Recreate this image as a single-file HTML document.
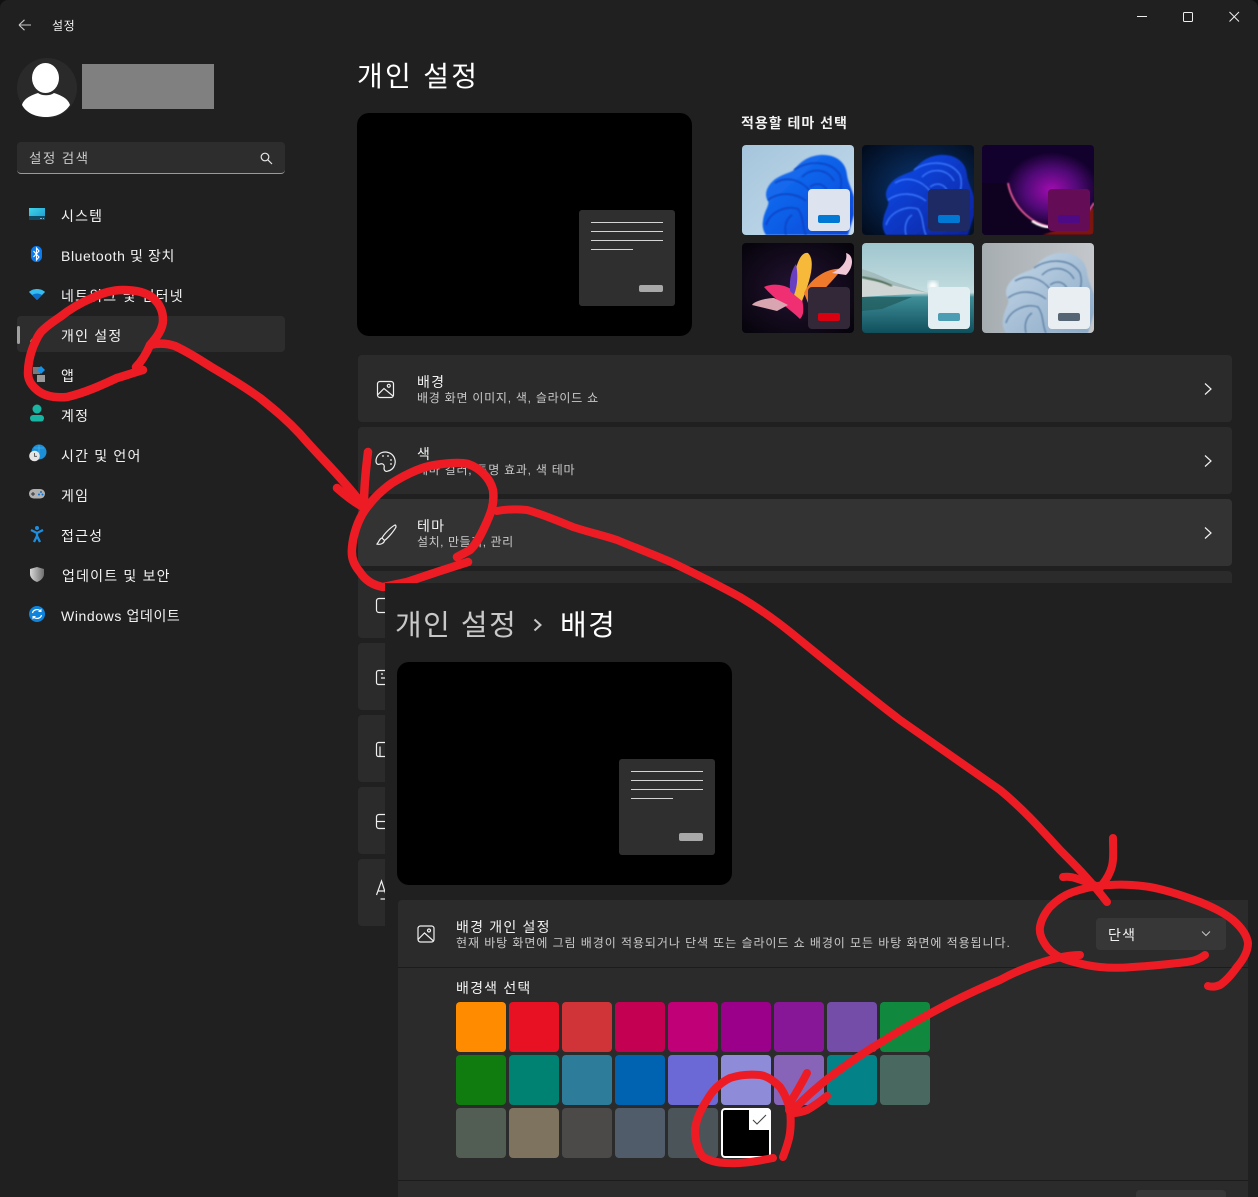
<!DOCTYPE html>
<html lang="ko"><head><meta charset="utf-8"><title>설정</title>
<style>
html,body{margin:0;padding:0;background:#111}
#w{position:relative;width:1258px;height:1197px;overflow:hidden;background:#202020;border-radius:8px 8px 0 0;font-family:"Liberation Sans","Noto Sans CJK KR",sans-serif;color:#fff}
#w div{position:absolute}
.t{position:absolute;white-space:nowrap;line-height:20px;font-size:14px;letter-spacing:.6px;color:#f2f2f2}
.k{letter-spacing:1.2px}
.h{font-size:14px;letter-spacing:1.2px}
.s{font-size:12px;color:#c9c9c9;letter-spacing:.75px}
.c{left:358px;width:874px;height:67px;background:#2b2b2b;border-radius:4px}
svg{position:absolute;overflow:visible}
</style></head><body>
<div id="w">
<svg style="left:17px;top:18px" width="16" height="14" viewBox="0 0 16 14" fill="none" stroke="#c8c8c8" stroke-width="1.1"><path d="M2 7H14M2 7L7.5 1.8M2 7L7.5 12.2"/></svg>
<span class="t" style="left:52px;top:16px;font-size:12px">설정</span>
<svg style="left:1130px;top:8px" width="115" height="18" fill="none" stroke="#eee" stroke-width="1"><path d="M7 8.5H17"/><rect x="53.5" y="4.5" width="9" height="9" rx="1"/><path d="M99.5 4L109 13.5M109 4L99.5 13.5"/></svg>

<!-- Avatar -->
<div style="left:17px;top:58px;width:60px;height:60px;border-radius:50%;background:#2a2a2a"></div>
<svg style="left:17px;top:58px" width="60" height="60" fill="#fff"><ellipse cx="28.500" cy="20" rx="13.500" ry="15"/><path d="M5 47C7 40 15 37 21 35C25 38 33 38 37 35C43 37 51 40 53 47C47 56 38 59 29 59C20 59 10 56 5 47Z"/></svg>
<div style="left:82px;top:64px;width:132px;height:45px;background:#808080"></div>

<!-- Search -->
<div style="left:17px;top:142px;width:268px;height:31px;background:#2d2d2d;border-radius:4px;border-bottom:1px solid #9a9a9a"></div>
<span class="t" style="left:29px;top:149px;font-size:13.500px;letter-spacing:1.400px;color:#c8c8c8">설정 검색</span>
<svg style="left:260px;top:152px" width="13" height="13" fill="none" stroke="#e6e6e6" stroke-width="1.200"><circle cx="5" cy="5" r="3.800"/><path d="M7.800 7.800L12 12"/></svg>

<!-- Nav -->
<div style="left:17px;top:316px;width:268px;height:36px;background:#2d2d2d;border-radius:4px"></div>
<div style="left:17px;top:326px;width:3px;height:18px;background:#a0a0a0;border-radius:2px"></div>
<span class="t k" style="left:61px;top:206px">시스템</span>
<span class="t" style="left:61px;top:246px">Bluetooth 및 장치</span>
<span class="t k" style="left:61px;top:286px">네트워크 및 인터넷</span>
<span class="t k" style="left:61px;top:326px">개인 설정</span>
<span class="t k" style="left:61px;top:366px">앱</span>
<span class="t k" style="left:61px;top:406px">계정</span>
<span class="t k" style="left:61px;top:446px">시간 및 언어</span>
<span class="t k" style="left:61px;top:486px">게임</span>
<span class="t k" style="left:61px;top:526px">접근성</span>
<span class="t k" style="left:62px;top:566px">업데이트 및 보안</span>
<span class="t" style="left:61px;top:606px">Windows 업데이트</span>

<svg style="left:0;top:0" width="60" height="640">
<defs>
<linearGradient id="sys" x1="0" y1="0" x2="1" y2="1"><stop offset="0" stop-color="#3fd4e8"/><stop offset="1" stop-color="#1d9ad0"/></linearGradient>
<linearGradient id="shd" x1="0" x2="1"><stop offset="0" stop-color="#d8d8d8"/><stop offset="1" stop-color="#6f6f6f"/></linearGradient>
</defs>
<rect x="29" y="208" width="16" height="11" fill="url(#sys)"/><rect x="29" y="216" width="16" height="4" fill="#0e4a62"/><rect x="40" y="218" width="2" height="1" fill="#8ac"/><rect x="43" y="218" width="1" height="1" fill="#8ac"/>
<rect x="31" y="246" width="11" height="16" rx="5.500" fill="#0a7cf0"/><path d="M33.500 251L39 257L36.500 260V248L39 251L33.500 257" fill="none" stroke="#fff" stroke-width="1.100"/>
<path d="M29 292C33 288 41 288 45 292L37 300Z" fill="#36bdf0"/><path d="M32 295C35 293 39 293 42 295L37 300Z" fill="#0d6fc8"/>
<path d="M44 327L33 337L35 339L45 329Z" fill="#9a9a9a"/><path d="M30 342C31 339 33 337 35 338C36 340 34 342 30 342Z" fill="#f08a1d"/>
<rect x="33" y="367" width="7" height="7" fill="#7a7a7a"/><rect x="37" y="375" width="8" height="7" fill="#999"/><path d="M41 366L45 370L41 374L37 370Z" fill="#1592e8"/>
<circle cx="37" cy="409" r="4.500" fill="#17b5a2"/><rect x="30" y="415" width="14" height="6.500" rx="3.200" fill="#17b5a2"/>
<circle cx="39" cy="452" r="7.500" fill="#1b8fd8"/><path d="M34 448H44M39 445V459" stroke="#58c0f0" stroke-width=".6"/><circle cx="34.500" cy="456" r="5.300" fill="#e4e4e4"/><path d="M34.500 453V456.300H37" stroke="#444" fill="none" stroke-width=".8"/>
<rect x="29" y="489" width="16" height="9.500" rx="4.700" fill="#b0b0b0"/><path d="M31 494H35M33 492V496" stroke="#333"/><circle cx="41" cy="492" r="1" fill="#0a74d6"/><circle cx="39" cy="494.500" r="1" fill="#0a74d6"/><circle cx="42.500" cy="494.500" r="1" fill="#0a74d6"/>
<circle cx="37" cy="528" r="2" fill="#1e8ee0"/><path d="M31 530L37 533L43 530M37 533V536M37 536L34 542M37 536L40 542" fill="none" stroke="#1e8ee0" stroke-width="2.300"/>
<path d="M37 567L44 569V574C44 578 40 581 37 582C34 581 30 578 30 574V569Z" fill="url(#shd)"/>
<circle cx="37" cy="614" r="8" fill="#0f84dc"/><path d="M32.500 613C33 610 37 608.500 40 610.500M41.500 615C41 618 37 619.500 34 617.500" fill="none" stroke="#fff" stroke-width="1.200"/><path d="M41.500 608.500V612H38ZM32.500 619.500V616H36Z" fill="#fff"/>
</svg>

<!-- Main -->
<span class="t" style="left:357px;top:57px;font-size:28px;line-height:40px;letter-spacing:2.300px;color:#fff">개인 설정</span>

<div style="left:357px;top:113px;width:335px;height:223px;background:#000;border-radius:12px"></div>
<div style="left:579px;top:210px;width:96px;height:96px;background:#2f2f2f;border-radius:3px"></div>
<svg style="left:579px;top:210px" width="96" height="96" stroke="#d5d5d5" stroke-width="1"><path d="M12 12.500H84M12 21.500H84M12 30.500H84M12 39.500H54"/><rect x="60" y="75" width="24" height="7" rx="2" fill="#a8a8a8" stroke="none"/></svg>

<span class="t" style="left:741px;top:113px;font-size:14px;font-weight:700;letter-spacing:1px">적용할 테마 선택</span>

<!-- Thumbs -->
<svg style="left:742px;top:145px" width="352" height="188" viewBox="0 0 352 188">
<defs>
<clipPath id="cp"><rect width="112" height="90" rx="4"/></clipPath>
<linearGradient id="b1" x1="0" y1="0" x2="1" y2="1"><stop offset="0" stop-color="#a5c5dc"/><stop offset="1" stop-color="#c6dcec"/></linearGradient>
<radialGradient id="b2" cx=".55" cy=".5" r=".7"><stop offset="0" stop-color="#0b3a78"/><stop offset="1" stop-color="#020c1e"/></radialGradient>
<radialGradient id="b3" cx=".62" cy=".5" r=".42"><stop offset="0" stop-color="#a00cb0"/><stop offset=".55" stop-color="#520a78"/><stop offset="1" stop-color="#12012c"/></radialGradient>
<radialGradient id="b4" cx=".5" cy=".5" r=".7"><stop offset="0" stop-color="#241433"/><stop offset="1" stop-color="#05030a"/></radialGradient>
<linearGradient id="sky" x1="0" y1="0" x2="0" y2="1"><stop offset="0" stop-color="#9fc6cf"/><stop offset=".55" stop-color="#c3dcdf"/><stop offset=".6" stop-color="#3f8e98"/><stop offset="1" stop-color="#0f4f5c"/></linearGradient>
<linearGradient id="gr" x1="0" x2="1"><stop offset="0" stop-color="#a6adb0"/><stop offset="1" stop-color="#c4c7cb"/></linearGradient>
<linearGradient id="pb" x1="0" y1="0" x2="1" y2="1"><stop offset="0" stop-color="#1577f5"/><stop offset="1" stop-color="#0a45d8"/></linearGradient>
<linearGradient id="pd" x1="0" y1="0" x2="1" y2="1"><stop offset="0" stop-color="#1050f0"/><stop offset="1" stop-color="#06209a"/></linearGradient>
<linearGradient id="pg" x1="0" y1="0" x2="1" y2="1"><stop offset="0" stop-color="#c5d8e8"/><stop offset="1" stop-color="#8aa8c6"/></linearGradient>
<filter id="bl"><feGaussianBlur stdDeviation=".7"/></filter>
<filter id="bl2"><feGaussianBlur stdDeviation="2"/></filter>
<path id="bm" d="M21 76C22 66 28 60 26 56C22 50 24 42 32 35C40 29 48 28 52 25C58 17 66 11 78 10C92 9 104 16 105 30C106 38 110 44 112 52V70L106 90H24C21 86 20 80 21 76Z"/>
<g id="fold" fill="none" stroke-width="1.400"><path d="M24 80C28 66 46 60 56 64C62 72 60 82 64 90"/><path d="M26 55C38 46 54 48 64 56"/><path d="M33 38C46 30 60 36 68 46"/><path d="M52 25C64 16 88 14 98 30C102 42 96 54 90 60"/><path d="M60 32C70 22 86 24 92 36"/><path d="M68 42C76 36 84 40 86 48"/><path d="M44 90C42 82 44 74 50 70"/></g>
</defs>
<g clip-path="url(#cp)"><rect width="112" height="90" fill="url(#b1)"/><use href="#bm" fill="url(#pb)" filter="url(#bl)"/><use href="#fold" stroke="#0a3fc0" filter="url(#bl)"/><rect x="66" y="44" width="42" height="42" rx="4" fill="#dde4f0"/><rect x="76" y="70" width="22" height="8" rx="2" fill="#0078d4"/></g>
<g transform="translate(120 0)"><g clip-path="url(#cp)"><rect width="112" height="90" fill="url(#b2)"/><use href="#bm" fill="url(#pd)" filter="url(#bl)"/><use href="#fold" stroke="#3a78ff" filter="url(#bl)"/><rect x="66" y="44" width="42" height="42" rx="4" fill="#1e2a63"/><rect x="76" y="70" width="22" height="8" rx="2" fill="#0078d4"/></g></g>
<g transform="translate(240 0)"><g clip-path="url(#cp)"><rect width="112" height="90" fill="#12012c"/><rect width="112" height="90" fill="url(#b3)"/><path d="M26 38C30 62 52 84 78 82C92 81 104 72 112 58V90H0V38Z" fill="#0e0220"/><path d="M60 90C72 86 90 82 112 62V90Z" fill="#7a1208" filter="url(#bl)"/><path d="M26 38C30 62 52 84 78 82C92 81 104 72 112 58" fill="none" stroke="#ef5a9a" stroke-width="1.800" filter="url(#bl)"/><path d="M50 76C62 84 78 85 92 78" fill="none" stroke="#fff" stroke-width="2.500" filter="url(#bl)"/><rect x="66" y="44" width="42" height="42" rx="4" fill="#650c56"/><rect x="76" y="70" width="22" height="8" rx="2" fill="#4e0a85"/></g></g>
<g transform="translate(0 98)"><g clip-path="url(#cp)"><rect width="112" height="90" fill="url(#b4)"/><path d="M22 44C35 38 52 44 60 56C62 66 62 72 58 76C48 66 32 56 22 44Z" fill="#ef2f72"/><path d="M32 55C25 55 12 58 10 62L35 68L46 62Z" fill="#d8a5b0"/><path d="M50 50C52 25 58 8 66 10C74 18 68 38 60 58Z" fill="#f7b93a"/><path d="M48 48C47 35 50 26 54 21C56 30 56 42 52 52Z" fill="#6a3ec0"/><path d="M62 50C70 32 90 24 100 26C92 36 80 50 66 60Z" fill="#f07a2c"/><path d="M90 30C100 25 106 18 104 10C112 12 112 24 104 32Z" fill="#f0c8d8"/><rect x="66" y="44" width="42" height="42" rx="4" fill="#332838"/><rect x="76" y="70" width="22" height="8" rx="2" fill="#d9000f"/></g></g>
<g transform="translate(120 98)"><g clip-path="url(#cp)"><rect width="112" height="90" fill="url(#sky)"/><path d="M0 26L12 30L30 38L66 50H0Z" fill="#a4bcbc"/><path d="M0 36C14 38 36 44 66 50L0 54Z" fill="#d0d6d4"/><path d="M0 34C10 36 20 38 30 43" stroke="#3a5a3c" stroke-width="1.500" fill="none" filter="url(#bl)"/><path d="M0 54H50L20 66L0 68Z" fill="#1f5a5a" opacity=".7"/><circle cx="71" cy="43" r="5" fill="#fff" filter="url(#bl2)"/><rect x="66" y="44" width="42" height="42" rx="4" fill="#e2eef1"/><rect x="76" y="70" width="22" height="8" rx="2" fill="#4a9db2"/></g></g>
<g transform="translate(240 98)"><g clip-path="url(#cp)"><rect width="112" height="90" fill="url(#gr)"/><use href="#bm" fill="url(#pg)" filter="url(#bl)"/><use href="#fold" stroke="#5f80a5" filter="url(#bl)"/><rect x="66" y="44" width="42" height="42" rx="4" fill="#e8eef2"/><rect x="76" y="70" width="22" height="8" rx="2" fill="#566573"/></g></g>
</svg>

<!-- Cards -->
<div class="c" style="top:355px"></div>
<div class="c" style="top:427px"></div>
<div class="c" style="top:499px;background:#333"></div>
<div class="c" style="top:571px"></div>
<div class="c" style="top:643px"></div>
<div class="c" style="top:715px"></div>
<div class="c" style="top:787px"></div>
<div class="c" style="top:859px"></div>

<span class="t h" style="left:417px;top:372px">배경</span>
<span class="t s" style="left:417px;top:388px">배경 화면 이미지, 색, 슬라이드 쇼</span>
<span class="t h" style="left:417px;top:444px">색</span>
<span class="t s" style="left:417px;top:460px">테마 컬러, 투명 효과, 색 테마</span>
<span class="t h" style="left:417px;top:516px">테마</span>
<span class="t s" style="left:417px;top:532px;letter-spacing:.55px">설치, 만들기, 관리</span>

<svg style="left:370px;top:375px" width="860" height="560" fill="none" stroke="#f0f0f0" stroke-width="1.200">
<rect x="7.500" y="6.500" width="16" height="16" rx="2.500"/><circle cx="18.800" cy="10.800" r="1.500"/><path d="M7.500 20L14 13.500L23 21"/>
<path d="M15 77C9 77 6 82 6 86C6 89 8 90 10 89C13 88 15 90 14 93C14 96 16 97 18 96C23 95 26 90 25 85C24 80 20 77 15 77Z"/><g fill="#f0f0f0" stroke="none"><circle cx="13" cy="81" r=".9"/><circle cx="18" cy="81" r=".9"/><circle cx="21" cy="85" r=".9"/><circle cx="21" cy="89" r=".9"/></g>
<path d="M25 150C21 152 14 159 12 163L14.500 165.500C18 163 24 156 26 152C26 150.500 25.500 150 25 150ZM12 163C9 164 9 167 7 169C10 170 14 168.500 14.500 165.500"/>
<path d="M835 8.500L841 14L835 19.500M835 80.500L841 86L835 91.500M835 152.500L841 158L835 163.500"/>
<rect x="6.500" y="223.500" width="14" height="14" rx="2.500"/>
<rect x="6.500" y="295.500" width="14" height="14" rx="2"/><path d="M11 299H13M11 303H15" />
<rect x="6.500" y="367.500" width="14" height="14" rx="2"/><path d="M10 371.500V381"/>
<rect x="6.500" y="439.500" width="14" height="14" rx="2.500"/><path d="M6.500 446.500H20"/>
<path d="M6.500 520L11.500 506L16 520M8 516H15M10.500 524H16"/>
</svg>

<!-- red strokes below panel -->
<svg style="left:0;top:0" width="1258" height="1197" fill="none" stroke="#ed1c24" stroke-width="8.500" stroke-linecap="round" stroke-linejoin="round">
<path d="M143 370C135 372 125 376 117 378C100 386 84 393 67 397C55 398 44 396 37 390C31 385 28 380 28 373C28 363 30 355 33 347C36 340 39 333 43 330C48 325 54 321 60 317C70 309 80 303 92 298C102 293 112 290 123 290C135 290 148 292 155 300C161 306 163 313 163 320C163 329 157 337 150 345C147 352 143 360 136 367"/>
<path d="M150 345C158 343 166 343 175 346C190 353 200 360 213 368C230 378 245 387 260 398C275 410 287 420 300 434C312 448 322 458 333 470C345 483 355 495 364 506"/>
<path d="M337 488C346 496 355 503 365 508"/>
<path d="M368 452C366 468 364 486 364 504"/>
<path d="M468 562L440 571L407 582L383 587C372 585 365 580 360 572C354 565 351 558 352 548C353 535 358 520 365 510C372 500 382 490 392 483C405 475 420 467 435 465C448 463 460 462 468 464C480 468 490 478 493 490C495 505 490 515 485 526C480 537 476 544 470 550L457 557"/>
</svg>

<!-- Overlay panel -->
<div style="left:385px;top:583px;width:873px;height:614px;background:#202020"></div>
<span class="t" style="left:395px;top:605px;font-size:29px;line-height:42px;letter-spacing:1.500px;color:#c8c8c8">개인 설정</span>
<svg style="left:532px;top:617px" width="12" height="16" fill="none" stroke="#c8c8c8" stroke-width="2"><path d="M2.500 2.500L8.500 8L2.500 13.500"/></svg>
<span class="t" style="left:560px;top:605px;font-size:29px;line-height:42px;letter-spacing:1.500px;color:#fff">배경</span>

<div style="left:397px;top:662px;width:335px;height:223px;background:#000;border-radius:12px"></div>
<div style="left:619px;top:759px;width:96px;height:96px;background:#2f2f2f;border-radius:3px"></div>
<svg style="left:619px;top:759px" width="96" height="96" stroke="#d5d5d5" stroke-width="1"><path d="M12 12.500H84M12 21.500H84M12 30.500H84M12 39.500H54"/><rect x="60" y="74" width="24" height="8" rx="2" fill="#a8a8a8" stroke="none"/></svg>

<div style="left:398px;top:900px;width:850px;height:297px;background:#2b2b2b;border-radius:4px 0 0 0"></div>
<div style="left:398px;top:967px;width:850px;height:1px;background:#1c1c1c"></div>
<div style="left:398px;top:1180px;width:850px;height:1px;background:#1c1c1c"></div>
<div style="left:1136px;top:1190px;width:90px;height:10px;background:#373737;border-radius:4px"></div>
<svg style="left:416px;top:924px" width="20" height="20" fill="none" stroke="#f0f0f0" stroke-width="1.200"><rect x="2" y="2" width="16" height="16" rx="2.500"/><circle cx="13" cy="6.500" r="1.500"/><path d="M2 15.500L8.500 9L17.500 17"/></svg>
<span class="t h" style="left:456px;top:917px">배경 개인 설정</span>
<span class="t s" style="left:456px;top:933px;letter-spacing:.93px">현재 바탕 화면에 그림 배경이 적용되거나 단색 또는 슬라이드 쇼 배경이 모든 바탕 화면에 적용됩니다.</span>
<div style="left:1096px;top:918px;width:130px;height:32px;background:#373737;border-radius:4px"></div>
<span class="t h" style="left:1108px;top:925px">단색</span>
<svg style="left:1200px;top:929px" width="12" height="10" fill="none" stroke="#c8c8c8" stroke-width="1"><path d="M2 2.500L6 6.500L10 2.500"/></svg>

<span class="t h" style="left:456px;top:978px">배경색 선택</span>

<div style="left:456px;top:1002px;width:50px;height:50px;border-radius:4px;background:#ff8c00"></div>
<div style="left:509px;top:1002px;width:50px;height:50px;border-radius:4px;background:#e81123"></div>
<div style="left:562px;top:1002px;width:50px;height:50px;border-radius:4px;background:#d13438"></div>
<div style="left:615px;top:1002px;width:50px;height:50px;border-radius:4px;background:#c30052"></div>
<div style="left:668px;top:1002px;width:50px;height:50px;border-radius:4px;background:#bf0077"></div>
<div style="left:721px;top:1002px;width:50px;height:50px;border-radius:4px;background:#9a0089"></div>
<div style="left:774px;top:1002px;width:50px;height:50px;border-radius:4px;background:#881798"></div>
<div style="left:827px;top:1002px;width:50px;height:50px;border-radius:4px;background:#744da9"></div>
<div style="left:880px;top:1002px;width:50px;height:50px;border-radius:4px;background:#10893e"></div>
<div style="left:456px;top:1055px;width:50px;height:50px;border-radius:4px;background:#107c10"></div>
<div style="left:509px;top:1055px;width:50px;height:50px;border-radius:4px;background:#008272"></div>
<div style="left:562px;top:1055px;width:50px;height:50px;border-radius:4px;background:#2d7d9a"></div>
<div style="left:615px;top:1055px;width:50px;height:50px;border-radius:4px;background:#0063b1"></div>
<div style="left:668px;top:1055px;width:50px;height:50px;border-radius:4px;background:#6b69d6"></div>
<div style="left:721px;top:1055px;width:50px;height:50px;border-radius:4px;background:#8e8cd8"></div>
<div style="left:774px;top:1055px;width:50px;height:50px;border-radius:4px;background:#8764b8"></div>
<div style="left:827px;top:1055px;width:50px;height:50px;border-radius:4px;background:#038387"></div>
<div style="left:880px;top:1055px;width:50px;height:50px;border-radius:4px;background:#486860"></div>
<div style="left:456px;top:1108px;width:50px;height:50px;border-radius:4px;background:#525e54"></div>
<div style="left:509px;top:1108px;width:50px;height:50px;border-radius:4px;background:#7e735f"></div>
<div style="left:562px;top:1108px;width:50px;height:50px;border-radius:4px;background:#4c4a48"></div>
<div style="left:615px;top:1108px;width:50px;height:50px;border-radius:4px;background:#515c6b"></div>
<div style="left:668px;top:1108px;width:50px;height:50px;border-radius:4px;background:#4a5459"></div>
<div style="left:721px;top:1108px;width:46px;height:46px;border:2px solid #fff;border-radius:4px;background:#000"></div>
<div style="left:749px;top:1108px;width:22px;height:22px;background:#fff;border-radius:0 4px 0 0"></div>
<svg style="left:751px;top:1112px" width="18" height="16" fill="none" stroke="#444" stroke-width="1.100"><path d="M2 8L6 12L15 3"/></svg>

<!-- red strokes above panel -->
<svg style="left:0;top:0" width="1258" height="1197" fill="none" stroke="#ed1c24" stroke-width="8" stroke-linecap="round" stroke-linejoin="round">
<path d="M497 511C507 509 517 509 527 510C542 514 558 521 573 527C588 532 602 535 617 540C636 548 655 555 673 563C696 574 718 585 740 597C762 610 782 625 800 640C833 667 866 694 900 720C933 743 967 767 1000 790C1022 808 1040 828 1060 850C1075 865 1090 880 1107 902"/>
<path d="M1113 838C1113 850 1114 858 1112 866C1110 874 1106 880 1102 885"/>
<path d="M1063 877C1070 876 1075 878 1081 880C1088 882 1094 885 1100 888"/>
<path d="M1205 955C1200 959 1194 961 1187 962C1170 964 1150 966 1133 967C1122 968 1110 968 1100 967C1088 966 1077 963 1067 960C1058 957 1051 952 1047 947C1042 940 1039 934 1040 927C1041 920 1045 913 1050 907C1057 900 1064 895 1073 892C1085 888 1098 885 1110 885C1124 884 1137 885 1150 887C1167 890 1184 896 1200 902C1212 907 1223 912 1233 920C1241 927 1247 935 1248 943C1248 952 1243 960 1237 967C1232 974 1226 981 1220 985C1215 987 1211 987 1208 986"/>
<path d="M1080 955C1066 955 1052 959 1040 963C1027 967 1013 973 1000 980C983 987 966 995 950 1003C927 1015 903 1028 880 1043C863 1053 846 1065 830 1077C817 1087 805 1098 793 1110"/>
<path d="M807 1073C802 1083 796 1093 790 1103C789 1106 789 1108 789 1110"/>
<path d="M827 1096C821 1101 814 1106 807 1110C802 1112 798 1113 793 1113"/>
<path d="M783 1157C786 1149 789 1141 790 1133C791 1125 791 1118 790 1110C788 1102 785 1094 780 1087C774 1081 767 1076 760 1075C750 1074 739 1075 730 1078C720 1083 712 1091 707 1100C701 1109 696 1120 695 1130C695 1141 698 1151 703 1157C710 1161 718 1163 727 1163C742 1164 758 1161 773 1158"/>
</svg>
</div>
</body></html>
